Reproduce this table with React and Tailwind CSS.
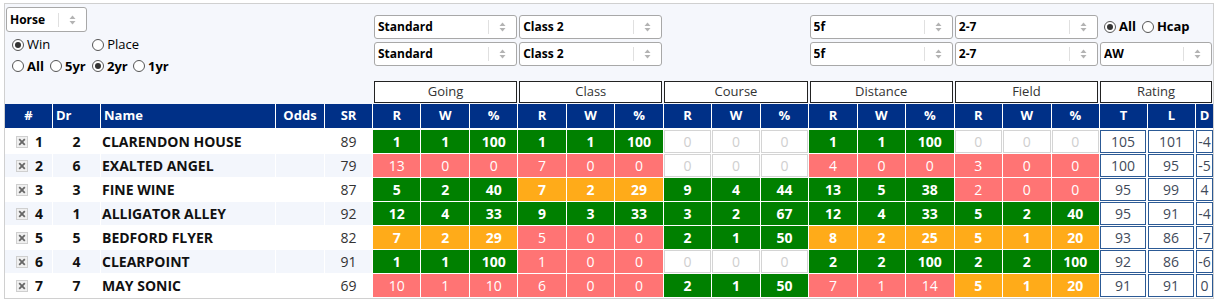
import React from 'react';

const FONT = { fontFamily: '"Open Sans", "Noto Sans", Arial, sans-serif' };

const GRID =
  'grid grid-cols-[47px_47px_174px_48px_47px_repeat(15,minmax(0,1fr))_47px_47px_17px] gap-x-px';

const rows = [
  { n: 1, dr: 2, name: 'CLARENDON HOUSE', sr: 89, g: ['G', 1, 1, 100], c: ['G', 1, 1, 100], co: ['E', 0, 0, 0], d: ['G', 1, 1, 100], f: ['E', 0, 0, 0], t: 105, l: 101, dd: '-4' },
  { n: 2, dr: 6, name: 'EXALTED ANGEL', sr: 79, g: ['R', 13, 0, 0], c: ['R', 7, 0, 0], co: ['E', 0, 0, 0], d: ['R', 4, 0, 0], f: ['R', 3, 0, 0], t: 100, l: 95, dd: '-5' },
  { n: 3, dr: 3, name: 'FINE WINE', sr: 87, g: ['G', 5, 2, 40], c: ['O', 7, 2, 29], co: ['G', 9, 4, 44], d: ['G', 13, 5, 38], f: ['R', 2, 0, 0], t: 95, l: 99, dd: '4' },
  { n: 4, dr: 1, name: 'ALLIGATOR ALLEY', sr: 92, g: ['G', 12, 4, 33], c: ['G', 9, 3, 33], co: ['G', 3, 2, 67], d: ['G', 12, 4, 33], f: ['G', 5, 2, 40], t: 95, l: 91, dd: '-4' },
  { n: 5, dr: 5, name: 'BEDFORD FLYER', sr: 82, g: ['O', 7, 2, 29], c: ['R', 5, 0, 0], co: ['G', 2, 1, 50], d: ['O', 8, 2, 25], f: ['O', 5, 1, 20], t: 93, l: 86, dd: '-7' },
  { n: 6, dr: 4, name: 'CLEARPOINT', sr: 91, g: ['G', 1, 1, 100], c: ['R', 1, 0, 0], co: ['E', 0, 0, 0], d: ['G', 2, 2, 100], f: ['G', 2, 2, 100], t: 92, l: 86, dd: '-6' },
  { n: 7, dr: 7, name: 'MAY SONIC', sr: 69, g: ['R', 10, 1, 10], c: ['R', 6, 0, 0], co: ['G', 2, 1, 50], d: ['R', 7, 1, 14], f: ['O', 5, 1, 20], t: 91, l: 91, dd: '0' },
];

const tone = {
  G: 'bg-[#008000] border-[#008000] text-white font-bold',
  R: 'bg-[#ff7474] border-[#ff7474] text-white',
  O: 'bg-[#ffab19] border-[#ffab19] text-white font-bold',
  E: 'bg-white border-[#d4d4d4] text-[#cfcfcf]',
};

function Arrows() {
  return (
    <svg width="7" height="10" viewBox="0 0 7 10">
      <path d="M3.5 0.5 L6.5 4 L0.5 4 Z" fill="#b3b3b3" />
      <path d="M0.5 6 L6.5 6 L3.5 9.5 Z" fill="#b3b3b3" />
    </svg>
  );
}

function Select({ value, className = '' }) {
  return (
    <div
      className={`flex h-[24px] items-center rounded-[3px] border border-[#a8a8a8] bg-white pl-[3px] text-[12px] font-bold text-black ${className}`}
    >
      <span className="flex-1 truncate">{value}</span>
      <span className="h-[14px] w-px bg-[#e0e0e0]" />
      <span className="flex w-[27px] justify-center">
        <Arrows />
      </span>
    </div>
  );
}

function Radio({ label, checked, bold }) {
  return (
    <label className={`flex items-center gap-[3px] text-[13px] text-black ${bold ? 'font-bold' : ''}`}>
      <span className="flex h-[12px] w-[12px] items-center justify-center rounded-full border border-[#555] bg-white">
        {checked && <span className="h-[6px] w-[6px] rounded-full bg-[#333]" />}
      </span>
      {label}
    </label>
  );
}

function GroupTop({ top, bottom, label }) {
  return (
    <div className="flex flex-col pl-[1px] pr-[1px]">
      <div className="mt-[11px] flex h-[24px] items-center">{top}</div>
      <div className="mt-[3px] h-[24px]">{bottom}</div>
      <div className="mt-[15px] flex h-[22px] items-center justify-center border border-[#222] bg-white text-[13px] text-[#333]">
        {label}
      </div>
    </div>
  );
}

function XBox() {
  return (
    <svg width="12" height="12" viewBox="0 0 12 12">
      <rect x="0.5" y="0.5" width="11" height="11" fill="#f0f0f0" stroke="#cfcfcf" />
      <path d="M3.2 3.2 L8.8 8.8 M8.8 3.2 L3.2 8.8" stroke="#666" strokeWidth="1.8" />
    </svg>
  );
}

function Stat({ s }) {
  const [k, r, w, p] = s;
  const cls = `flex items-center justify-center border ${tone[k]}`;
  return (
    <>
      <div className={cls}>{r}</div>
      <div className={cls}>{w}</div>
      <div className={cls}>{p}</div>
    </>
  );
}

export default function App() {
  const head = 'flex items-center justify-center bg-[#003087] text-white font-bold';
  return (
    <div className="min-h-screen bg-white pl-[4px] pt-[3px]" style={FONT}>
      <div className="w-[1210px] border border-[#d0d0d0] bg-white">
        {/* filters */}
        <div className="grid grid-cols-[368px_repeat(5,minmax(0,1fr))_114px] bg-[#f5f7fc] pb-[1px]">
          <div className="flex flex-col pl-[1px] pt-[3px]">
            <Select value="Horse" className="h-[25px] w-[81px]" />
            <div className="mt-[3px] flex gap-[42px] pl-[6px]">
              <Radio label="Win" checked />
              <Radio label="Place" />
            </div>
            <div className="mt-[2px] flex pl-[6px]">
              <div className="w-[38px]">
                <Radio label="All" bold />
              </div>
              <div className="w-[42px]">
                <Radio label="5yr" bold />
              </div>
              <div className="w-[41px]">
                <Radio label="2yr" bold checked />
              </div>
              <Radio label="1yr" bold />
            </div>
          </div>
          <GroupTop top={<Select value="Standard" className="w-full" />} bottom={<Select value="Standard" />} label="Going" />
          <GroupTop top={<Select value="Class 2" className="w-full" />} bottom={<Select value="Class 2" />} label="Class" />
          <GroupTop top={null} bottom={null} label="Course" />
          <GroupTop top={<Select value="5f" className="w-full" />} bottom={<Select value="5f" />} label="Distance" />
          <GroupTop top={<Select value="2-7" className="w-full" />} bottom={<Select value="2-7" />} label="Field" />
          <GroupTop
            top={
              <div className="flex gap-[6px] pl-[4px]">
                <Radio label="All" bold checked />
                <Radio label="Hcap" bold />
              </div>
            }
            bottom={<Select value="AW" />}
            label="Rating"
          />
        </div>

        {/* table */}
        <div className="flex flex-col gap-y-[2px]">
          <div className={`${GRID} h-[24px] text-[13px]`}>
            <div className={head}>#</div>
            <div className={`${head} !justify-start pl-[3px]`}>Dr</div>
            <div className={`${head} !justify-start pl-[3px]`}>Name</div>
            <div className={head}>Odds</div>
            <div className={head}>SR</div>
            {Array.from({ length: 5 }).flatMap((_, i) => [
              <div key={`r${i}`} className={head}>R</div>,
              <div key={`w${i}`} className={head}>W</div>,
              <div key={`p${i}`} className={head}>%</div>,
            ])}
            <div className={head}>T</div>
            <div className={head}>L</div>
            <div className={head}>D</div>
          </div>

          {rows.map((r, i) => {
            const bg = i % 2 === 1 ? 'bg-[#f3f6fc]' : 'bg-white';
            const rate = 'flex items-center justify-center border border-[#2c5a95] bg-white text-[#3f4a5a]';
            return (
              <div key={r.n} className={`${GRID} h-[22px] text-[14px]`}>
                <div className={`flex items-center gap-[7px] pl-[11px] font-bold text-[#111] ${bg}`}>
                  <XBox />
                  {r.n}
                </div>
                <div className={`flex items-center justify-center font-bold text-[#111] ${bg}`}>{r.dr}</div>
                <div className={`flex items-center pl-[1px] font-bold text-[#111] ${bg}`}>{r.name}</div>
                <div className={bg} />
                <div className={`flex items-center justify-center text-[#333] ${bg}`}>{r.sr}</div>
                <Stat s={r.g} />
                <Stat s={r.c} />
                <Stat s={r.co} />
                <Stat s={r.d} />
                <Stat s={r.f} />
                <div className={`${rate} mr-[1px]`}>{r.t}</div>
                <div className={`${rate} mr-[1px]`}>{r.l}</div>
                <div className={rate}>{r.dd}</div>
              </div>
            );
          })}
          <div className="h-0" />
        </div>
      </div>
    </div>
  );
}
